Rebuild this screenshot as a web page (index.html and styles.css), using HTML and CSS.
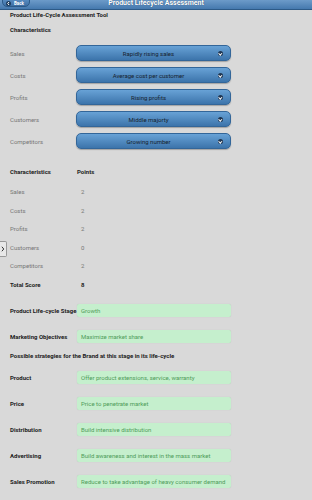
FILE: index.html
```html
<!DOCTYPE html>
<html>
    <head>
        <title>Product Lifecycle Assessment</title>
        <meta charset="utf-8" />
        <meta name="viewport" content="width=device-width, initial-scale=1.0" />
        <link rel="stylesheet" href="styles.css">
    </head>
    <body>
        <header class="bar">
            <a class="back" href="#"><span class="back-icon"><svg viewBox="0 0 10 10" width="5" height="5"><path d="M6 2 L3.5 5 L6 8" fill="none" stroke="#fff" stroke-width="2"/></svg></span>Back</a>
            <h1>Product Lifecycle Assessment</h1>
        </header>

        <main class="page">
            <div class="title">Product Life-Cycle Assessment Tool</div>
            <div class="heading">Characteristics</div>

            <div class="selects">
                <div class="row"><span class="label">Sales</span><button class="select">Rapidly rising sales<span class="chev"></span></button></div>
                <div class="row"><span class="label">Costs</span><button class="select">Average cost per customer<span class="chev"></span></button></div>
                <div class="row"><span class="label">Profits</span><button class="select">Rising profits<span class="chev"></span></button></div>
                <div class="row"><span class="label">Customers</span><button class="select">Middle majorty<span class="chev"></span></button></div>
                <div class="row"><span class="label">Competitors</span><button class="select">Growing number<span class="chev"></span></button></div>
            </div>

            <div class="points">
                <div class="prow head"><span class="label">Characteristics</span><span class="val">Points</span></div>
                <div class="prow"><span class="label">Sales</span><span class="val num">2</span></div>
                <div class="prow"><span class="label">Costs</span><span class="val num">2</span></div>
                <div class="prow"><span class="label">Profits</span><span class="val num">2</span></div>
                <div class="prow"><span class="label">Customers</span><span class="val num">0</span></div>
                <div class="prow"><span class="label">Competitors</span><span class="val num">2</span></div>
                <div class="prow head"><span class="label">Total Score</span><span class="val num">8</span></div>
            </div>

            <div class="result stage"><span class="label">Product Life-cycle Stage</span><span class="box">Growth</span></div>
            <div class="result"><span class="label">Marketing Objectives</span><span class="box">Maximize market share</span></div>
            <div class="strategies">Possible strategies for the Brand at this stage in its life-cycle</div>
            <div class="result"><span class="label">Product</span><span class="box">Offer product extensions, service, warranty</span></div>
            <div class="result"><span class="label">Price</span><span class="box">Price to penetrate market</span></div>
            <div class="result"><span class="label">Distribution</span><span class="box">Build intensive distribution</span></div>
            <div class="result"><span class="label">Advertising</span><span class="box">Build awareness and interest in the mass market</span></div>
            <div class="result"><span class="label">Sales Promotion</span><span class="box">Reduce to take advantage of heavy consumer demand</span></div>
        </main>

        <div class="panel-tab"><svg viewBox="0 0 8 16" width="7" height="16"><path d="M2.5 5 L5 8 L2.5 11" fill="none" stroke="#222" stroke-width="1.2"/></svg></div>
    </body>
</html>
```

FILE: styles.css
```css
html, body {
    margin: 0;
    padding: 0;
    background: #d9d9d9;
    font-family: Roboto, "Liberation Sans", sans-serif;
    font-size: 6px;
    color: #777;
}
.bar {
    position: relative;
    height: 9px;
    background: linear-gradient(#6d9bc9, #4579ae);
    border-bottom: 1px solid #2d5a87;
}
.bar h1 {
    margin: 0;
    text-align: center;
    color: #fff;
    font-size: 7px;
    line-height: 6px;
    font-weight: bold;
    text-shadow: 0 0 1px #1d3f63;
}
.back {
    position: absolute;
    left: 2px;
    top: -2px;
    width: 28px;
    height: 9px;
    box-sizing: border-box;
    display: flex;
    align-items: center;
    padding-left: 3px;
    padding-top: 1px;
    border: 1px solid #2c5a88;
    border-radius: 0 0 5px 5px;
    background: linear-gradient(#5b8fc4, #3d6fa3);
    color: #fff;
    font-size: 4.5px;
    font-weight: bold;
    text-decoration: none;
}
.back-icon {
    display: flex;
    align-items: center;
    justify-content: center;
    width: 5px;
    height: 5px;
    margin-right: 3px;
    border-radius: 50%;
    background: #1e3d5e;
}
.page {
    padding-left: 10px;
}
.title {
    margin-top: 1px;
    line-height: 8px;
    color: #222;
    font-weight: bold;
}
.heading {
    margin-top: 7px;
    line-height: 8px;
    color: #222;
    font-weight: bold;
}
.selects {
    margin-top: 8px;
}
.row {
    display: flex;
    align-items: center;
    height: 22px;
}
.label {
    flex: 0 0 66px;
}
.select {
    position: relative;
    width: 155px;
    height: 16px;
    margin: 0;
    padding: 0 10px 0 0;
    border: 1px solid #336699;
    border-radius: 5px;
    background: linear-gradient(#68a2d6, #3c74ab);
    box-shadow: 0 1px 1px rgba(0, 0, 0, 0.25);
    font-family: Roboto, "Liberation Sans", sans-serif;
    font-size: 6px;
    color: #16222e;
}
.chev {
    position: absolute;
    right: 7px;
    top: 5px;
    width: 5px;
    height: 5px;
    border-radius: 50%;
    background: #1e3551;
}
.chev::after {
    content: "";
    position: absolute;
    left: 1.4px;
    top: 0.6px;
    width: 1.6px;
    height: 1.6px;
    border-right: 1px solid #fff;
    border-bottom: 1px solid #fff;
    transform: rotate(45deg);
}
.points {
    margin-top: 10px;
}
.prow {
    display: flex;
    align-items: center;
    height: 18.5px;
}
.prow:first-child {
    height: 18px;
    margin-bottom: 2.5px;
}
.prow .label {
    flex: 0 0 67px;
}
.head {
    color: #222;
    font-weight: bold;
}
.num {
    padding-left: 4px;
}
.result {
    display: flex;
    align-items: center;
    height: 26px;
    color: #222;
    font-weight: bold;
}
.stage {
    margin-top: 3.5px;
}
.result .label {
    flex: 0 0 67px;
}
.box {
    width: 154px;
    height: 13px;
    line-height: 13px;
    box-sizing: border-box;
    padding-left: 4px;
    border-radius: 2px;
    background: #c5efcd;
    box-shadow: 0 0 1px rgba(0, 0, 0, 0.15);
    color: #4f9c5a;
    font-weight: normal;
    white-space: nowrap;
    overflow: hidden;
}
.strategies {
    line-height: 14px;
    color: #222;
    font-weight: bold;
    margin-bottom: 1px;
}
.panel-tab {
    position: absolute;
    left: 0;
    top: 241px;
    width: 7px;
    height: 16px;
    box-sizing: border-box;
    border: 1px solid #999;
    border-left: none;
    border-radius: 0 2px 2px 0;
    background: #e8e8e8;
    display: flex;
    align-items: center;
    justify-content: center;
}
```
